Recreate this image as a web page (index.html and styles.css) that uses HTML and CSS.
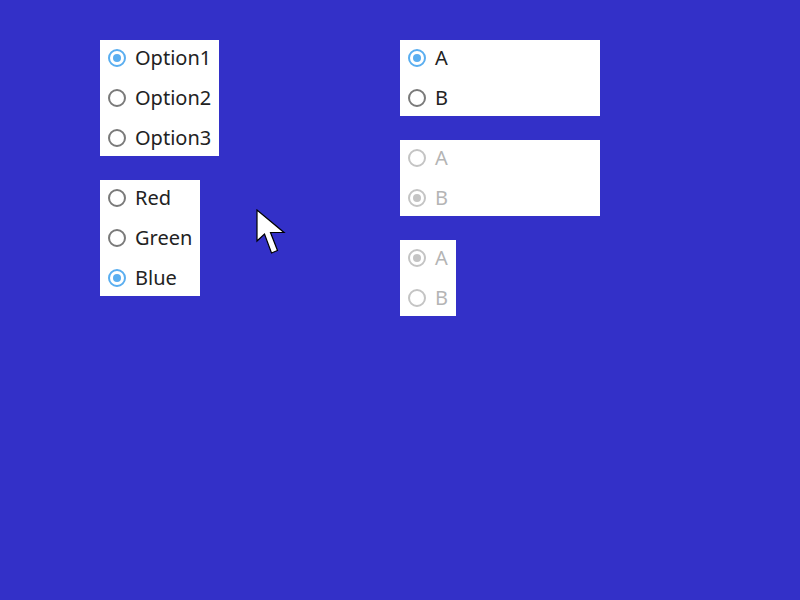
FILE: index.html
```html
<!DOCTYPE html>
<html>
<head>
<meta charset="utf-8">
<link rel="stylesheet" href="styles.css">
</head>
<body>
<div class="page">
  <div class="col col-left">
    <div class="group">
      <div class="row"><span class="radio checked"></span><span class="label">Option1</span></div>
      <div class="row"><span class="radio"></span><span class="label">Option2</span></div>
      <div class="row"><span class="radio"></span><span class="label">Option3</span></div>
    </div>
    <div class="group">
      <div class="row"><span class="radio"></span><span class="label">Red</span></div>
      <div class="row"><span class="radio"></span><span class="label">Green</span></div>
      <div class="row"><span class="radio checked"></span><span class="label">Blue</span></div>
    </div>
  </div>
  <div class="col col-right">
    <div class="group wide">
      <div class="row"><span class="radio checked"></span><span class="label">A</span></div>
      <div class="row"><span class="radio"></span><span class="label">B</span></div>
    </div>
    <div class="group wide disabled">
      <div class="row"><span class="radio"></span><span class="label">A</span></div>
      <div class="row"><span class="radio checked"></span><span class="label">B</span></div>
    </div>
    <div class="group disabled">
      <div class="row"><span class="radio checked"></span><span class="label">A</span></div>
      <div class="row"><span class="radio"></span><span class="label">B</span></div>
    </div>
  </div>
</div>
<svg class="cursor" width="34" height="50" viewBox="0 0 34 50">
  <path d="M1 1 L1 32 L8.5 25 L15.5 44 L21.5 41.5 L14.5 23.5 L28 23.5 Z" fill="#fff" stroke="#000" stroke-width="1.2" stroke-linejoin="miter"/>
</svg>
</body>
</html>
```
FILE: styles.css
```css
html, body {
  margin: 0;
  padding: 0;
}
body {
  background: #3330c8;
  width: 800px;
  height: 600px;
  overflow: hidden;
  font-family: "Noto Sans", "Open Sans", sans-serif;
  position: relative;
}
.page {
  display: flex;
  padding: 40px 0 0 100px;
}
.col {
  display: flex;
  flex-direction: column;
  align-items: flex-start;
  gap: 24px;
}
.col-left {
  width: 300px;
}
.group {
  background: #fff;
  display: flex;
  flex-direction: column;
  gap: 4px;
  padding: 0 8px 0 8px;
}
.group.wide {
  width: 184px;
}
.row {
  height: 36px;
  display: flex;
  align-items: center;
  gap: 9px;
}
.radio {
  width: 18px;
  height: 18px;
  box-sizing: border-box;
  border: 2px solid #7a7a7a;
  border-radius: 50%;
  display: flex;
  align-items: center;
  justify-content: center;
  flex: none;
}
.radio.checked {
  border-color: #5aaef0;
}
.radio.checked::after {
  content: "";
  width: 8px;
  height: 8px;
  border-radius: 50%;
  background: #5aaef0;
}
.label {
  font-size: 20px;
  color: #222;
  line-height: 1;
}
.disabled .radio {
  border-color: #c4c4c4;
}
.disabled .radio.checked::after {
  background: #c4c4c4;
}
.disabled .label {
  color: #b4b4b4;
}
.cursor {
  position: absolute;
  left: 256px;
  top: 209px;
}
```
